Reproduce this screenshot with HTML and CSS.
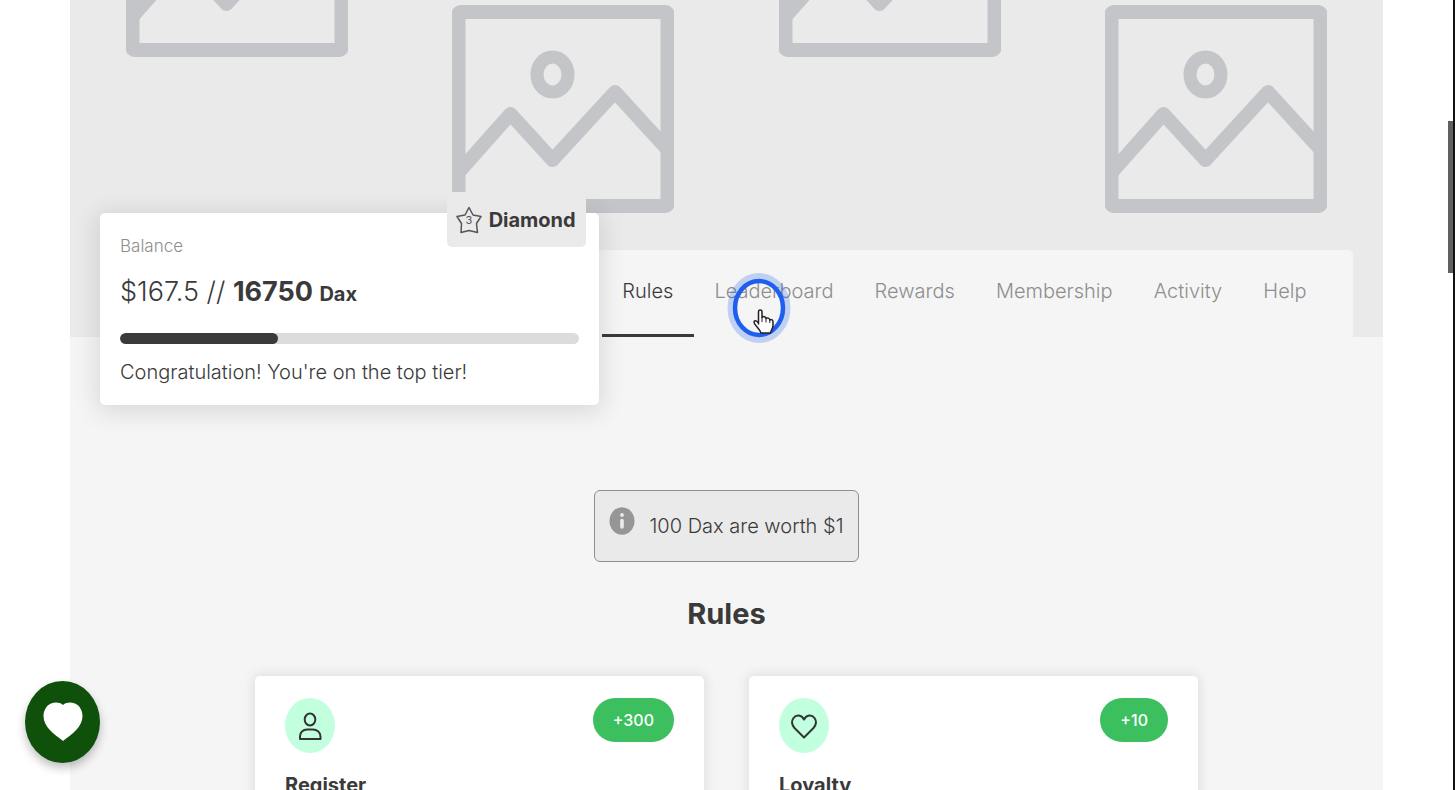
FILE: index.html
```html
<!DOCTYPE html>
<html lang="en">
<head>
<meta charset="utf-8">
<meta name="viewport" content="width=device-width, initial-scale=1">
<title>Rewards program</title>
<link rel="stylesheet" href="styles.css">
</head>
<body>
<svg class="defs" aria-hidden="true">
  <symbol id="placeholder" viewBox="0 0 222 208">
    <g fill="none" stroke="#c4c5c9" stroke-width="13" stroke-linejoin="round">
      <rect x="6.5" y="7" width="209" height="194" rx="2" stroke-width="14"/>
      <ellipse cx="100.500" cy="69.500" rx="15.500" ry="17.500"/>
      <path d="M6 168L58.500 109L100.500 155L163 87L216 145" stroke-width="14"/>
    </g>
  </symbol>
</svg>
<main class="page">
  <section class="hero">
    <div class="hero-art">
      <svg class="tile tile-raised" aria-hidden="true"><use href="#placeholder"/></svg>
      <svg class="tile" aria-hidden="true"><use href="#placeholder"/></svg>
      <svg class="tile tile-raised" aria-hidden="true"><use href="#placeholder"/></svg>
      <svg class="tile" aria-hidden="true"><use href="#placeholder"/></svg>
    </div>
    <div class="hero-bar">
      <section class="balance">
        <div class="tier">
          <svg class="tier-icon" viewBox="0 0 26 28" aria-hidden="true">
            <path d="M13 1.500L17 9L25 10.500L20.500 17.500L21.500 26.500L13 24.500L5 26.500L5.500 17.500L1 10.500L9 9Z" fill="none" stroke="#555" stroke-width="1.500" stroke-linejoin="round"/>
            <text x="13" y="18" text-anchor="middle" class="tier-number">3</text>
          </svg>
          <span>Diamond</span>
        </div>
        <h2 class="balance-label">Balance</h2>
        <p class="balance-amount">$167.5 // <strong>16750 <small>Dax</small></strong></p>
        <div class="progress"><div class="progress-fill"></div></div>
        <p class="balance-note">Congratulation! You're on the top tier!</p>
      </section>
      <nav class="tabs">
        <a class="tab tab-active" href="#rules">Rules</a>
        <a class="tab" href="#leaderboard">Leaderboard</a>
        <a class="tab" href="#rewards">Rewards</a>
        <a class="tab" href="#membership">Membership</a>
        <a class="tab" href="#activity">Activity</a>
        <a class="tab" href="#help">Help</a>
      </nav>
    </div>
  </section>
  <section class="rules" id="rules">
    <div class="notice">
      <svg class="notice-icon" viewBox="0 0 26 28" aria-hidden="true">
        <ellipse cx="13" cy="14" rx="12.500" ry="13.800" fill="#969696"/>
        <circle cx="13" cy="8" r="1.900" fill="#ebebeb"/>
        <path d="M13 13.500V20" stroke="#ebebeb" stroke-width="3.600" stroke-linecap="round"/>
      </svg>
      <span>100 Dax are worth $1</span>
    </div>
    <h1 class="rules-title">Rules</h1>
    <div class="cards">
      <article class="card">
        <div class="card-top">
          <svg class="card-icon" viewBox="0 0 50 55" aria-hidden="true">
            <ellipse cx="25" cy="27.500" rx="25" ry="27.500" fill="#c1ffdf"/>
            <g fill="none" stroke="#333" stroke-width="2" stroke-linejoin="round">
              <ellipse cx="25" cy="21.500" rx="5.300" ry="6"/>
              <path d="M15 41V38.500C15 34 18.500 31.500 22 31.500H28C31.500 31.500 35.500 34 35.500 38.500V41Z"/>
            </g>
          </svg>
          <span class="points">+300</span>
        </div>
        <h3 class="card-title">Register</h3>
      </article>
      <article class="card">
        <div class="card-top">
          <svg class="card-icon" viewBox="0 0 50 55" aria-hidden="true">
            <ellipse cx="25" cy="27.500" rx="25" ry="27.500" fill="#c1ffdf"/>
            <path d="M25 21.500C22.500 16.500 17 16.500 14.500 20C12 23.500 13 27 15.500 30L25 39.500L34.500 30C37 27 38 23.500 35.500 20C33 16.500 27.500 16.500 25 21.500Z" fill="none" stroke="#333" stroke-width="2" stroke-linejoin="round"/>
          </svg>
          <span class="points">+10</span>
        </div>
        <h3 class="card-title">Loyalty</h3>
      </article>
    </div>
  </section>
</main>
<button class="launcher" type="button" aria-label="Open rewards">
  <svg class="launcher-icon" viewBox="0 0 40 40" aria-hidden="true"><path d="M20 3C16.500 0 12 0 8 1.500C3 3.500 .5 9 .5 14C.5 25 11 32 20 39C29 32 39.500 25 39.500 14C39.500 9 37 3.500 32 1.500C28 0 23.500 0 20 3Z" fill="#fff"/></svg>
</button>
<svg class="pointer" viewBox="0 0 64 70" aria-hidden="true">
  <ellipse cx="32" cy="35" rx="27.500" ry="31" fill="none" stroke="#2563eb" stroke-opacity=".25" stroke-width="8"/>
  <ellipse cx="32" cy="35" rx="24" ry="27" fill="none" stroke="#1f5fee" stroke-width="4.500"/>
  <path d="M31.500 51V38.500C31.500 36.500 35 36.500 35 38.500V44.500C36 43 38.800 43.500 39 45.500C40.500 44.500 42.500 45 42.800 47C44.500 46 46 47 46 49V52.500C46 55.500 44 57 43.500 60H34C33 56.500 29 53.500 27.500 50.500C26 47.500 29 46.500 31.500 50Z" fill="#fff" stroke="#222" stroke-width="1.500" stroke-linejoin="round"/>
  <path d="M35 44V49M39 45V49.500M42.800 47V50" fill="none" stroke="#222" stroke-width="1"/>
</svg>
<div class="scroll-rail" aria-hidden="true"><div class="scroll-thumb"></div></div>
</body>
</html>
```

FILE: styles.css
```css
* { box-sizing: border-box; }

html, body { height: 100%; overflow: hidden; }

body {
  margin: 0;
  background: #fff;
  color: #3a3a3a;
  font: 300 20px/24px Inter, "Open Sans", sans-serif;
}

h1, h2, h3, p { margin: 0; }

.defs { position: absolute; width: 0; height: 0; }

.page {
  min-height: 100vh;
  margin: 0 72px 0 70px;
  background: #f5f5f5;
}

.hero { display: grid; background: #eaeaea; }

.hero-art, .hero-bar { grid-area: 1 / 1; }

.hero-art {
  display: flex;
  justify-content: space-between;
  align-items: flex-start;
  padding: 5px 56px 0;
  height: 337px;
  overflow: hidden;
}

.tile { width: 222px; height: 208px; flex: none; }
.tile-raised { margin-top: -156px; }

.hero-bar {
  display: flex;
  align-items: flex-end;
  padding: 0 30px;
}

.balance {
  position: relative;
  flex: 0 0 39.8%;
  margin-bottom: -68px;
  padding: 21px 20px;
  border-radius: 5px;
  background: #fff;
  box-shadow: 0 4px 24px 4px rgba(0, 0, 0, .11);
}

.tier {
  position: absolute;
  top: -21px;
  right: 13px;
  display: flex;
  align-items: center;
  gap: 7px;
  height: 55px;
  padding: 0 10px 0 9px;
  border-radius: 5px;
  background: #eaeaea;
  font-weight: 700;
}

.tier-icon { width: 26px; height: 28px; }
.tier-number { font-size: 11px; font-weight: 400; fill: #555; }

.balance-label {
  color: #8e8e8e;
  font-size: 17px;
  font-weight: 300;
}

.balance-amount {
  margin-top: 17px;
  font-size: 27px;
  line-height: 34px;
}

.balance-amount strong { font-weight: 700; }
.balance-amount small { font-size: 20px; }

.progress {
  height: 11px;
  margin-top: 22px;
  border-radius: 6px;
  background: #dcdcdc;
  overflow: hidden;
}

.progress-fill {
  width: 34.500%;
  height: 100%;
  border-radius: 6px;
  background: #3a3a3a;
}

.balance-note { margin-top: 16px; }

.tabs {
  display: flex;
  flex: 1;
  height: 87px;
  padding: 0 26px 0 3px;
  border-radius: 0 5px 0 0;
  background: #f5f5f5;
}

.tab {
  flex: 1 1 auto;
  padding: 29px 0 0;
  border-bottom: 3px solid transparent;
  color: #8e8e8e;
  text-align: center;
  text-decoration: none;
}

.tab-active { border-color: #3a3a3a; color: #3a3a3a; }

.rules {
  display: flex;
  flex-direction: column;
  align-items: center;
  padding: 153px 30px 0;
}

.notice {
  display: flex;
  gap: 14px;
  padding: 16px 14px;
  border: 1px solid #8e8e8e;
  border-radius: 6px;
  background: #eaeaea;
  line-height: 38px;
}

.notice-icon { width: 26px; height: 28px; }

.rules-title {
  margin-top: 34px;
  font-size: 29px;
  font-weight: 700;
  line-height: 36px;
}

.cards {
  display: grid;
  grid-template-columns: 1fr 1fr;
  gap: 45px;
  width: 100%;
  max-width: 943px;
  margin-top: 44px;
}

.card {
  padding: 22px 30px 30px;
  border-radius: 5px;
  background: #fff;
  box-shadow: 0 0 12px 2px rgba(0, 0, 0, .09);
}

.card-top {
  display: flex;
  justify-content: space-between;
  align-items: flex-start;
}

.card-icon { width: 50px; height: 55px; }

.points {
  padding: 0 20px;
  border-radius: 22px;
  background: #3cbf5e;
  color: #fff;
  font-size: 16px;
  font-weight: 500;
  line-height: 44px;
}

.card-title {
  margin-top: 20px;
  font-size: 20px;
  font-weight: 700;
}

.launcher {
  position: fixed;
  left: 25px;
  bottom: 27px;
  display: grid;
  place-items: center;
  width: 75px;
  height: 82px;
  padding: 0;
  border: 0;
  border-radius: 50%;
  background: #0f500a;
  box-shadow: 0 5px 10px rgba(0, 0, 0, .25);
}

.launcher-icon { width: 40px; height: 40px; }

.pointer {
  position: absolute;
  top: 273px;
  left: 727px;
  width: 64px;
  height: 70px;
}

.scroll-rail {
  position: fixed;
  top: 0;
  right: 0;
  bottom: 0;
  width: 7px;
  padding-top: 121px;
  border-right: 2px solid #111;
}

.scroll-thumb { height: 152px; background: #606060; }
```
